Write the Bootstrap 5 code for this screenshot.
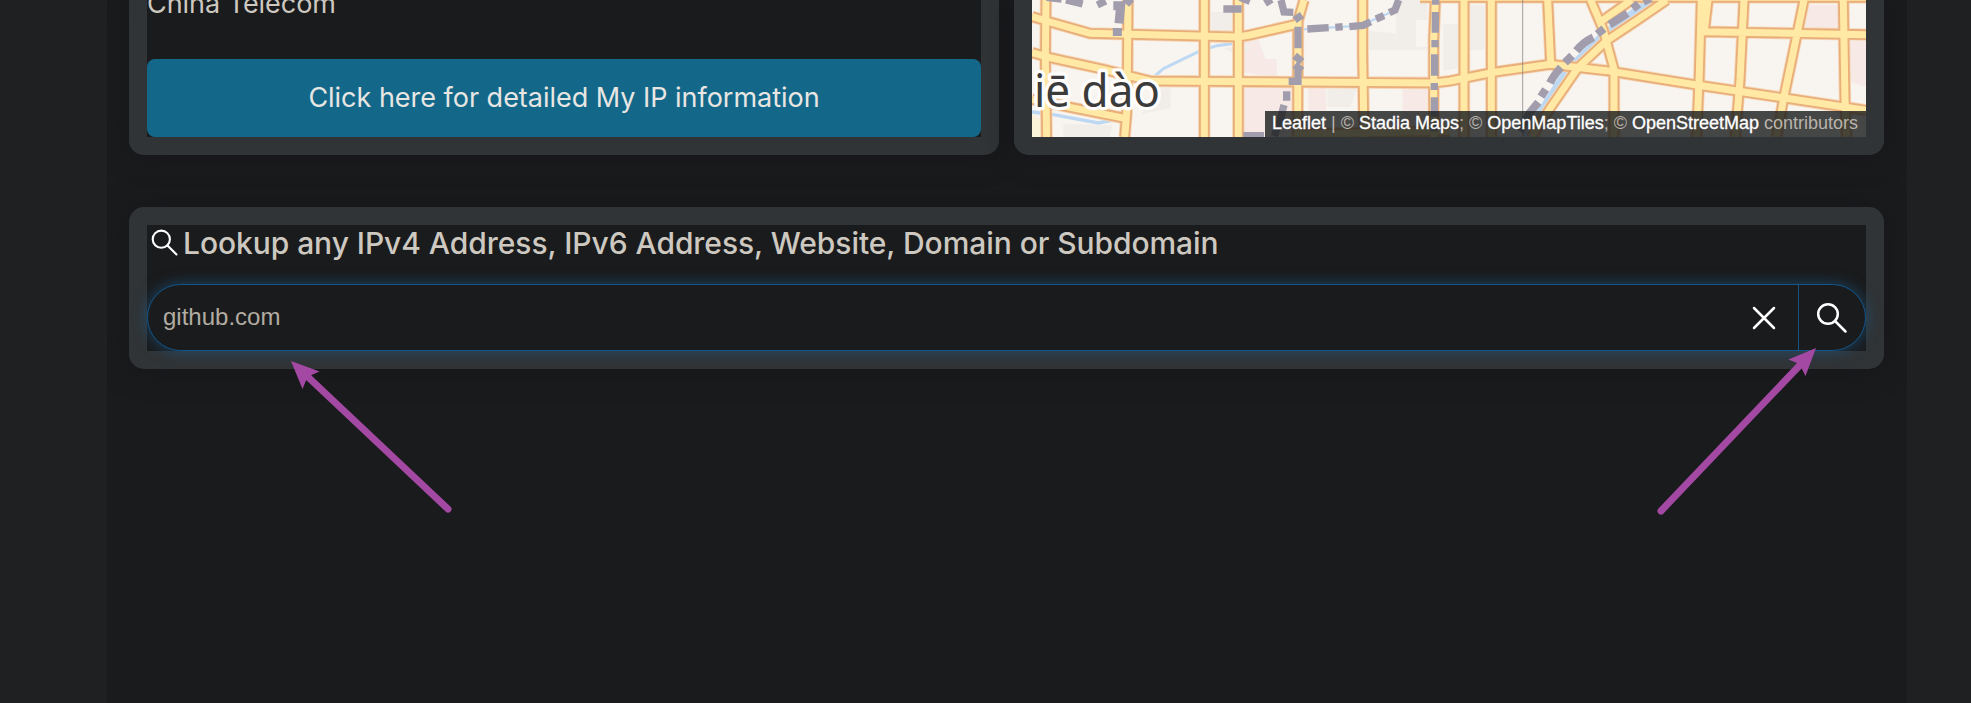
<!DOCTYPE html>
<html lang="en">
<head>
<meta charset="utf-8">
<meta name="viewport" content="width=device-width, initial-scale=1">
<title>IP Lookup</title>
<link href="https://cdn.jsdelivr.net/npm/bootstrap@5.3.0/dist/css/bootstrap.min.css" rel="stylesheet">
<style>
  body { background: #1e2021; color: #cdc8c0; font-family: Inter, sans-serif; height: 703px; overflow: hidden; }
  .page { width: 1800px; height: 703px; margin-left: 107px; padding: 0 23px 0 22px; background: #1a1b1c; overflow: hidden; }
  .panel { background: #1a1b1c; border: 18px solid #303436; border-radius: 15px; box-shadow: 0 0 28px rgba(22,22,27,.9); }
  .top-row { height: 155px; gap: 15px; }
  .top-row .panel { flex: 1 1 0; min-width: 0; border-top: 0; border-top-left-radius: 0; border-top-right-radius: 0; }
  .isp { font-size: 27px; letter-spacing: -.05px; line-height: 8px; height: 59px; }
  .btn-detail { height: 78px; border: 0; border-radius: 8px; background: #13688a; color: #e8e6e3; font-size: 27px; letter-spacing: -.02px; }
  .btn-detail:hover { background: #13688a; color: #e8e6e3; }
  .map svg { display: block; width: 834px; height: 137px; }
  .credit { right: 0; bottom: 0; width: 601px; height: 26px; background: rgba(24,26,27,.8); font: 18px/25px "Liberation Sans", Arial, sans-serif; color: #b9b4ab; padding-left: 7px; white-space: nowrap; }
  .credit a { color: #fff; text-decoration: none; -webkit-text-stroke: .3px #fff; }
  .lookup { margin-top: 52px; height: 162px; }
  .lookup h1 { font-size: 30px; font-weight: 500; letter-spacing: -.06px; height: 59px; line-height: 37px; color: #cdc8c0; margin: 0; padding-left: 4px; white-space: nowrap; }
  .lookup h1 svg { margin: 4px 4px 0 0; }
  .search { height: 67px; border: 1px solid #135589; border-radius: 33.5px; background: #1a1b1c; box-shadow: 0 0 14px 1px rgba(26,92,143,.55); }
  .search input { background: transparent; border: 0; outline: 0; color: #b2aca2; font: 24px "Liberation Sans", Arial, sans-serif; padding: 0 0 2px 15px; }
  .search button { background: none; border: 0; padding: 0; height: 65px; }
  .clear { width: 68px; }
  .go { width: 67px; border-left: 1px solid #135589 !important; }
  .search button svg { display: block; margin: 0 auto; }
  .arrows { inset: 0; width: 1971px; height: 703px; pointer-events: none; }
</style>
</head>
<body>
<main class="page">
  <div class="d-flex top-row">
    <section class="panel">
      <div class="isp">China Telecom</div>
      <a class="btn btn-detail w-100 d-flex align-items-center justify-content-center" href="#">Click here for detailed My IP information</a>
    </section>
    <section class="panel map position-relative">
      <svg viewBox="36 0 2502 411" preserveAspectRatio="none" fill="none">
        <defs>
          <g id="roads">
            <path d="M36 50L90 66L160 86L210 100L655 111L690 105L834 72"/>
            <path d="M36 158L90 173L250 208L390 243L1241 249L1290 243L1420 217L1590 193L1760 212L2030 255L2300 295L2538 331"/>
            <path d="M36 298L150 322L315 355M78 0L76 180L80 411M324 0L322 240L320 340L314 411M553 0V411M655 0V411M852 0L834 62L833 411M1028 0V160L1032 411M1246 0L1241 120V411"/>
            <path d="M1332 0V411M1414 0V411M1583 0L1592 190M1200 -8H2538M1535 411L1590 325L1675 202L1760 122L1850 62L1940 0M1835 0L1745 63M1712 0L1750 90L1782 208L1782 411"/>
            <path d="M2044 0L2038 220L2030 411M2064 0L2052 100M2052 95L2538 104M2172 0L2160 240L2146 411M2352 0L2315 180L2290 300L2270 411M2470 0L2475 300L2480 411M840 402L1290 394"/>
          </g>
        </defs>
        <rect x="36" width="2502" height="411" fill="#f8f4f0"/>
        <path fill="#f7e9e5" d="M668 125L715 120L736 177H770V232L668 217ZM670 262H820V411H670ZM865 264H918V333H865ZM1148 264H1220V411H1148ZM2360 15H2455V90H2350ZM2490 122H2538V260L2490 245Z"/>
        <path fill="#f1eeea" d="M574 36H642V98H574ZM1047 92L1126 100V150H1047ZM1130 0H1222V60H1188V140H1222V150H1126ZM922 266H1009L992 322L922 320ZM1350 16H1394V150H1350ZM1270 72H1316V205L1270 212ZM400 265H452V325L365 342ZM130 372L278 376L270 411H130ZM612 145L685 135L692 150L640 160Z"/>
        <path fill="#faf2d9" d="M36 342L64 360V411H36Z"/>
        <path stroke="#bcd8f2" stroke-width="9" d="M400 232L430 206L540 153L590 137L645 130"/>
        <path stroke="#bcd8f2" stroke-width="10" d="M36 336L100 344L235 369L280 360"/>
        <path stroke="#bcd8f2" stroke-width="7" d="M840 89L1020 77L1115 36"/>
        <path stroke="#bcd8f2" stroke-width="24" d="M1515 411L1570 325L1640 215L1750 105L1893 0"/>
        <use href="#roads" stroke="#f4d6b5" stroke-width="37"/>
        <use href="#roads" stroke="#e9ae7a" stroke-width="32"/>
        <use href="#roads" stroke="#ffe9a5" stroke-width="21"/>
        <g stroke="#a19dac" stroke-width="22">
          <path d="M80 -8L125 -3M138 0L188 12M232 15L257 3"/>
          <path d="M280 17H302L297 70M292 84V108" stroke-width="27"/>
          <path d="M315 -5L335 12M610 27H665M660 -8L690 4M735 10L755 -2M783 0L792 36L820 37"/>
          <path d="M824 60L846 45M834 80V145M824 167L846 185M824 195L846 212M834 210V244H806M800 274V302M792 315L780 362L763 408M670 407H732"/>
          <path d="M862 87L926 83M946 82L968 80M988 80L1030 76L1052 65M1068 57L1092 47M1108 38L1125 30L1136 0"/>
          <path d="M1247 0V14M1246 36V98M1245 120V142M1244 163V227M1243 249V270M1243 292V350M1242 372V394"/>
        </g>
        <path d="M1892 -5L1870 5M1856 12L1838 26M1822 40L1769 74M1752 86L1732 102M1720 112Q1690 126 1669 152M1656 167L1635 188M1623 202Q1600 227 1590 249M1577 268L1563 290M1555 307L1528 340L1500 394" stroke="#a19dac" stroke-width="24"/>
        <path d="M1508 0V411" stroke="#777" stroke-width="2"/>
        <text x="42" y="320" textLength="378" lengthAdjust="spacingAndGlyphs" font-family="Noto Sans, Open Sans, sans-serif" font-size="134" fill="#3b3b3b" stroke="#fffdfb" stroke-width="20" stroke-linejoin="round" paint-order="stroke">iē dào</text>
      </svg>
      <div class="credit position-absolute"><a href="#">Leaflet</a> | © <a href="#">Stadia Maps</a>; © <a href="#">OpenMapTiles</a>; © <a href="#">OpenStreetMap</a> contributors</div>
    </section>
  </div>
  <section class="panel lookup">
    <h1 class="d-flex align-items-start"><svg width="28" height="28" viewBox="0 0 28 28" fill="none" stroke="#fff" stroke-width="2.1" stroke-linecap="round"><circle cx="10.3" cy="10.2" r="8.6"/><path d="M16.500 16.500L25.500 25.500"/></svg><span>Lookup any IPv4 Address, IPv6 Address, Website, Domain or Subdomain</span></h1>
    <form class="search d-flex align-items-center">
      <input class="flex-grow-1" type="text" value="github.com" aria-label="Address">
      <button class="clear" type="button" aria-label="Clear"><svg width="24" height="24" viewBox="0 0 24 24" fill="none" stroke="#fff" stroke-width="2.5" stroke-linecap="round"><path d="M2 2L22 22M22 2L2 22"/></svg></button>
      <button class="go" type="button" aria-label="Search"><svg width="32" height="32" viewBox="0 0 32 32" fill="none" stroke="#fff" stroke-width="2.5" stroke-linecap="round"><circle cx="12" cy="12" r="9.8"/><path d="M19 19L29.500 29.500"/></svg></button>
    </form>
  </section>
</main>
<svg class="arrows position-absolute" viewBox="0 0 1971 703" fill="#a349a4">
  <path d="M448 509L308 377M1661 511L1801 364" stroke="#a349a4" stroke-width="7" stroke-linecap="round"/>
  <path d="M291 361L319.500 371.500L310.500 375.500L306 380.500L302.500 389ZM1816 348L1788.500 359.500L1797 363L1801.500 368L1805.500 376Z"/>
</svg>
<script src="https://cdn.jsdelivr.net/npm/bootstrap@5.3.0/dist/js/bootstrap.bundle.min.js"></script>
</body>
</html>
